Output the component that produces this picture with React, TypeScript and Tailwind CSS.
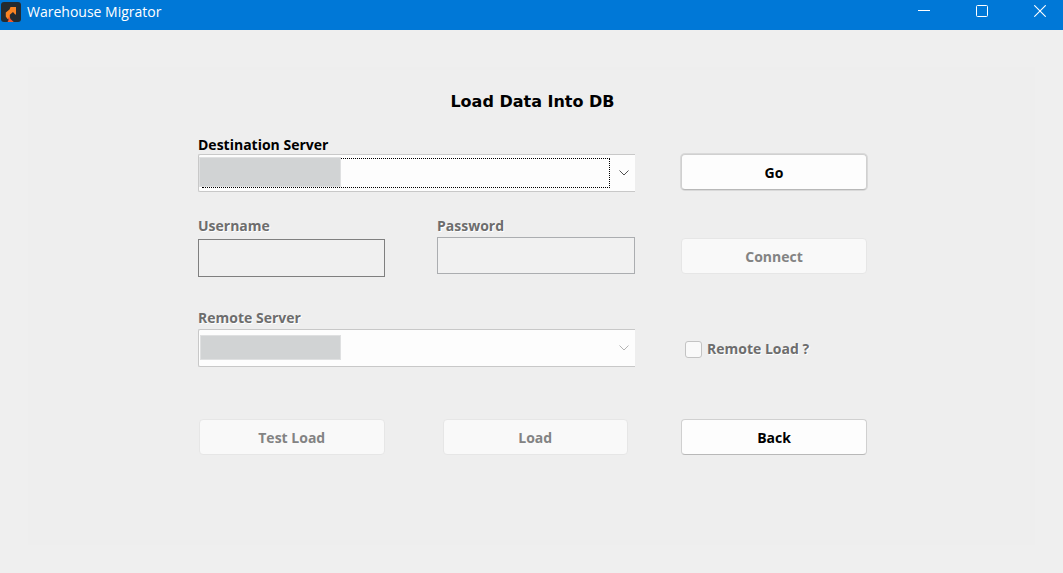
import type { ButtonHTMLAttributes, ReactNode } from "react";

function AppIcon() {
  return (
    <svg width="20" height="20" viewBox="0 0 20 20" aria-hidden="true" className="shrink-0">
      <rect width="20" height="20" rx="3" fill="#252b30" />
      <path d="M9.500 5H15V12.500H14.200L12 10 8.800 12.800V15.500L6.500 17 4.800 14.500V10.500L8.500 7.500z" fill="#fb8423" />
      <path d="M7 15.800 8.800 14.800 9.500 17 12.800 20H6.500L7.600 18z" fill="#f4582b" />
    </svg>
  );
}

function TitleBar() {
  const control = "flex h-[22px] w-[58px] items-center justify-center";
  return (
    <header className="flex h-[30px] items-start bg-[#0078d7] pl-px text-white">
      <div className="flex flex-1 items-center gap-1.5">
        <AppIcon />
        <h1 className="text-[14px] leading-6">Warehouse Migrator</h1>
      </div>
      <div className="-mr-1.5 flex">
        <button type="button" aria-label="Minimize" className={control}>
          <svg width="12" height="12" viewBox="0 0 12 12" stroke="currentColor">
            <path d="M0 5.500h12" />
          </svg>
        </button>
        <button type="button" aria-label="Maximize" className={control}>
          <svg width="12" height="12" viewBox="0 0 12 12" fill="none" stroke="currentColor">
            <rect x=".5" y=".5" width="11" height="11" rx="1" />
          </svg>
        </button>
        <button type="button" aria-label="Close" className={control}>
          <svg width="12" height="12" viewBox="0 0 12 12" stroke="currentColor" strokeWidth="1.100">
            <path d="M.3.300l11.400 11.400M11.700.300.300 11.700" />
          </svg>
        </button>
      </div>
    </header>
  );
}

function PushButton({ className = "", ...props }: ButtonHTMLAttributes<HTMLButtonElement>) {
  return (
    <button
      type="button"
      className={`h-9 w-full rounded border border-[#d0d0d0] border-b-[#b8b8b8] bg-[#fdfdfd] pt-0.5 text-black disabled:border-[#e6e6e6] disabled:bg-[#f9f9f9] disabled:text-[#838383] ${className}`}
      {...props}
    />
  );
}

function ServerSelect({ id, disabled = false, children }: { id: string; disabled?: boolean; children: ReactNode }) {
  return (
    <div className="relative">
      <select
        id={id}
        disabled={disabled}
        className="block h-[38px] w-full appearance-none rounded-l-xs border border-r-0 border-[#c8c8c8] bg-[#fdfdfd] px-2 opacity-100 outline-none"
      />
      {children}
      <svg
        width="10"
        height="6"
        viewBox="0 0 10 6"
        fill="none"
        className={`pointer-events-none absolute right-1.5 top-4 ${disabled ? "stroke-[#b4b4b4]" : "stroke-[#505050]"}`}
      >
        <path d="M.5.500 5 5 9.500.500" />
      </svg>
    </div>
  );
}

const row = "grid grid-cols-[437fr_186fr] gap-x-[46px]";
const disabledLabel = "block text-[#6d6d6d] [text-shadow:1px_1px_0_#fff]";

export default function App() {
  return (
    <div className="flex min-h-screen flex-col bg-[#efefef] font-['Open_Sans','Noto_Sans',sans-serif]">
      <TitleBar />
      <main className="flex flex-1 flex-col px-7 pb-7 pt-[37px]">
        <form className="flex-1 bg-[#eeeeee] pl-[26px] pr-6 pt-[23px] text-[14px] font-bold leading-[18px]">
          <h2 className="text-center font-['DejaVu_Sans',Verdana,sans-serif] text-[16px] leading-6">Load Data Into DB</h2>

          <div className="mx-auto w-full max-w-[669px] pt-[22px]">
            <div className={row}>
              <div>
                <label htmlFor="destination" className="block text-black">Destination Server</label>
                <ServerSelect id="destination">
                  <span className="pointer-events-none absolute bottom-1 left-1 right-[25px] top-1 border border-dotted border-black" />
                  <span className="pointer-events-none absolute left-px top-[3px] h-[30px] w-[142px] border border-[#dfe0e1] bg-[#d1d3d4]" />
                </ServerSelect>
              </div>
              <div className="pt-[18px]">
                <PushButton className="shadow-[0_0_0_1px_#d9d9d9]">Go</PushButton>
              </div>
            </div>

            <div className={`${row} pt-[25px]`}>
              <div className="grid grid-cols-[187fr_198fr] items-start gap-x-[52px]">
                <div>
                  <label htmlFor="username" className={`${disabledLabel} pb-1`}>Username</label>
                  <input
                    id="username"
                    type="text"
                    disabled
                    className="block h-[38px] w-full border border-[#7f7f7f] bg-[#f0f0f0] px-2"
                  />
                </div>
                <div>
                  <label htmlFor="password" className={`${disabledLabel} pb-0.5`}>Password</label>
                  <input
                    id="password"
                    type="password"
                    disabled
                    className="block h-[37px] w-full border border-[#abadb0] bg-[#f1f1f1] px-2"
                  />
                </div>
              </div>
              <div className="pt-[21px]">
                <PushButton disabled>Connect</PushButton>
              </div>
            </div>

            <div className={`${row} pt-8`}>
              <div>
                <label htmlFor="remote" className={`${disabledLabel} pb-0.5`}>Remote Server</label>
                <ServerSelect id="remote" disabled>
                  <span className="pointer-events-none absolute left-0.5 top-1.5 h-[25px] w-[141px] border border-[#dfe0e1] bg-[#d1d3d4]" />
                </ServerSelect>
              </div>
              <div className="flex items-center gap-[5px] self-end pb-[9px] pl-1">
                <input
                  id="remote-load"
                  type="checkbox"
                  disabled
                  className="size-[17px] shrink-0 appearance-none rounded-[3px] border border-[#c3c3c3] bg-[#f9f9f9]"
                />
                <label htmlFor="remote-load" className={disabledLabel}>Remote Load ?</label>
              </div>
            </div>

            <div className={`${row} pt-[52px]`}>
              <div className="grid grid-cols-2 gap-x-[58px] pl-px pr-[7px]">
                <PushButton disabled>Test Load</PushButton>
                <PushButton disabled>Load</PushButton>
              </div>
              <PushButton>Back</PushButton>
            </div>
          </div>
        </form>
      </main>
    </div>
  );
}
